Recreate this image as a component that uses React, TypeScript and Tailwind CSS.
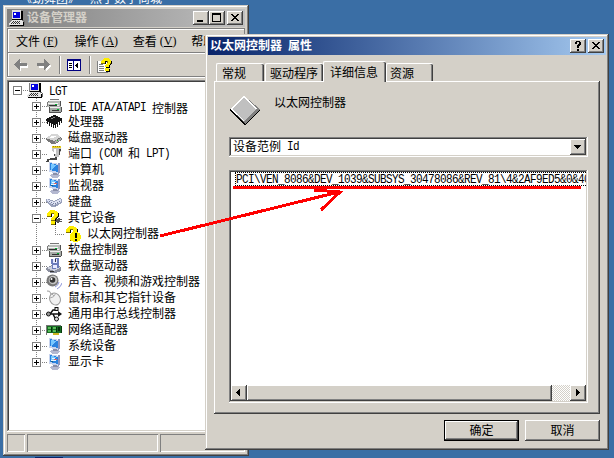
import React from 'react';

const WINDOW = 'bg-[#d4d0c8] shadow-[inset_-1px_-1px_#404040,inset_1px_1px_#d4d0c8,inset_-2px_-2px_#808080,inset_2px_2px_#ffffff]';
const RAISED = 'bg-[#d4d0c8] shadow-[inset_-1px_-1px_#404040,inset_1px_1px_#ffffff,inset_-2px_-2px_#808080]';
const SUNKEN = 'shadow-[inset_-1px_-1px_#ffffff,inset_1px_1px_#808080,inset_-2px_-2px_#d4d0c8,inset_2px_2px_#404040]';

// Chinese runs are 12px wide per character, latin runs 6px
const Text: React.FC<{ children: string }> = ({ children }) => (
    <span className="inline-flex items-center whitespace-pre">
        {(children.match(/[\x00-\x7f]+|[^\x00-\x7f]+/g) || []).map((run, i) =>
            run.charCodeAt(0) < 128 ? (
                <span key={i} className="inline-block translate-y-[0.5px] scale-y-[1.15] font-['Liberation_Mono',monospace] text-[11px] leading-[13px] tracking-[-0.6px]">{run}</span>
            ) : (
                <span key={i} className="font-['Noto_Sans_CJK_SC',sans-serif] text-[12px] leading-[14px]">{run}</span>
            )
        )}
    </span>
);

const Svg: React.FC<{ children: React.ReactNode; className?: string; size?: number }> = ({ children, className = '', size = 16 }) => (
    <svg width={size} height={size} viewBox={`0 0 ${size} ${size}`} className={`shrink-0 ${className}`} shapeRendering="crispEdges">
        {children}
    </svg>
);

const ComputerIcon = () => (
    <Svg>
        <path d="M3 0h9v10H2V1h1z" fill="#e0e0e0" />
        <path d="M2 1h1v9H2z" fill="#808080" />
        <path d="M12 1h2v9h-2zM3 9h10v1H3z" fill="#000" />
        <path d="M4 2h7v6H4z" fill="#0000e0" />
        <path d="M5 3h2v2H5z" fill="#fff" />
        <path d="M3 10h10l2 3v2H0v-2z" fill="#e4e4e4" />
        <path d="M1 15h14v1H1zM14 12h1v3h-1z" fill="#000" />
        <path d="M4 11h1v1H4zM6 11h1v1H6zM8 11h1v1H8zM10 11h1v1h-1zM3 12h1v1H3zM5 12h1v1H5zM7 12h1v1H7zM9 12h1v1H9zM2 13h1v1H2zM4 13h1v1H4zM6 13h1v1H6zM8 13h1v1H8zM10 13h1v1h-1z" fill="#303030" />
        <path d="M13 10h2v1h-2zM15 11h1v4h-1z" fill="#707070" />
    </Svg>
);

const ControllerIcon = () => (
    <Svg>
        <path d="M4 2h9l2 2v5H1V5z" fill="#b8bcb8" />
        <path d="M4 2h9l1 1H3zM1 5h11v1H1z" fill="#f4f4f4" />
        <path d="M4 1h9v1H4zM2 3h1v1H2zM1 4h1v4H1z" fill="#777" />
        <path d="M4 8h9l2 2v5H4z" fill="#a8aca8" />
        <path d="M5 7h8v1H5zM3 9h11v1H3z" fill="#eee" />
        <path d="M14 3h1v5h-1zM15 9h1v5h-1zM3 14h12v1H3zM3 9h1v5H3z" fill="#505050" />
        <path d="M6 12h7v1H6zM3 7h8v1H3z" fill="#333" />
        <path d="M9 6h2v1H9zM11 11h2v1h-2z" fill="#00b030" />
    </Svg>
);

const ChipIcon = () => (
    <Svg>
        <path d="M1 7h1v3H1zM3 8h1v4H3zM5 9h1v4H5zM7 10h1v4H7zM9 10h1v4H9zM11 8h1v5h-1zM13 7h1v4h-1zM15 6h1v3h-1z" fill="#111" />
        <path d="M7 1h3v1h2v1h2v1h2v2h-1v1h-1v1h-2v1h-1v1h-1v1H8v-1H6V9H4V8H2V7H0V5h1V4h2V3h2V2h2z" fill="#151515" />
        <path d="M7 3h2v1H7zM5 4h2v1H5z" fill="#888" />
    </Svg>
);

const DiskIcon = () => (
    <Svg>
        <path d="M0 8l6-4h5l5 4v2l-7 4H6L0 10z" fill="#777" />
        <path d="M0 8l6-4h5l4 3-7 4z" fill="#d5d5d5" />
        <path d="M5 6h5v1H5zM4 7h4v1H4z" fill="#fff" />
        <path d="M9 11l6-3v2l-6 3z" fill="#aaa" />
        <path d="M11 10h1v1h-1z" fill="#2b2" />
    </Svg>
);

const PortIcon = () => (
    <Svg>
        <path d="M6 0h9v2H6z" fill="#e8d020" />
        <path d="M7 0h1v1H7zM9 0h1v1H9zM11 0h1v1h-1zM13 0h1v1h-1z" fill="#a08800" />
        <path d="M6 2h9v3l-2 3v3H9V8L6 5z" fill="#c4c4c4" />
        <path d="M13 3h2v2h-1v4h-1zM8 7h1v3H8z" fill="#444" />
        <path d="M8 3h2v5H8z" fill="#fff" />
        <path d="M10 11v2H5L2 14v2H0" fill="none" stroke="#444" strokeWidth="1.5" />
    </Svg>
);

const MonitorIcon: React.FC<{ alt?: boolean }> = ({ alt }) => (
    <Svg>
        <path d="M4 13l6-3 4 3-3 3H6z" fill="#b4b8d0" />
        <path d="M7 11h5v2H7z" fill="#8a8ea8" />
        <path d="M3 0l10 2v10l-10-2z" fill="#c8d4ee" />
        <path d="M4 1l8 2v7l-8-2z" fill="#2b82df" />
        <path d="M5 2l5 1-4 5H5z" fill="#79c8ff" />
        <path d="M12 1h2v10l-2 1z" fill="#8c96c0" />
        {alt && (
            <g>
                <path d="M6 4h3v1H6zM5 6h5v1H5z" fill="#eaf6ff" />
                <path d="M8 5h3v1H8z" fill="#d66" />
                <path d="M5 7h2v1H5z" fill="#17608b" />
            </g>
        )}
    </Svg>
);

const KeyboardIcon = () => (
    <Svg>
        <path d="M0 5h3l5 2 6-3 2 2v3l-7 4H6L0 8z" fill="#9aa2bc" />
        <path d="M1 5l7 3 6-3 1 1v2l-7 3-6-3z" fill="#dce1f2" />
        <path d="M3 7h1v1H3zM5 8h1v1H5zM7 9h1v1H7zM9 9h1v1H9zM11 8h1v1h-1zM13 7h1v1h-1zM9 11h1v1H9zM6 10h1v1H6z" fill="#7680a0" />
    </Svg>
);

const QUESTION = 'M4 0h5v1h2v1h1v4h-1v1h-1v1H9v2H5V8h1V7h1V6h1V3H5v3H1V3h1V2h1V1h1zM5 11h4v3H5z';

const QuestionMark: React.FC<{ transform?: string }> = ({ transform }) => (
    <g transform={transform}>
        <path d={QUESTION} fill="#000" transform="translate(1 1)" />
        <path d={QUESTION} fill="#807000" transform="translate(-0.500 0.500)" />
        <path d={QUESTION} fill="#ffee00" />
    </g>
);

const QuestionIcon: React.FC<{ warn?: boolean }> = ({ warn }) => (
    <Svg>
        {!warn && <path d="M9 9h3V8h2v1h2v1h-2v1h2v1h-3v1h-2v-1H9z" fill="#555" />}
        <QuestionMark />
        {warn && (
            <g>
                <path d="M8 6h5v1h2v2h1v4h-1v2h-2v1H8v-1H6v-2H5V9h1V7h2z" fill="#fff000" />
                <path d="M10 7h2v5h-2zM10 13h2v2h-2z" fill="#000" />
            </g>
        )}
    </Svg>
);

const FloppyIcon = () => (
    <Svg>
        <path d="M0 10l6-3h7l2 3v3l-6 2H5l-5-3z" fill="#8c90a0" />
        <path d="M1 10l5-2h7l1 2-6 3z" fill="#ccd0dd" />
        <path d="M5 1l8-1v10l-7 1z" fill="#6c7cba" />
        <path d="M7 1h4v4H7zM7 7h4v3H7z" fill="#e8eaff" />
        <path d="M9 1h1v3H9z" fill="#334" />
        <path d="M4 13h4v1H4z" fill="#333" />
    </Svg>
);

const SpeakerIcon = () => (
    <svg width="16" height="16" viewBox="0 0 16 16" className="shrink-0">
        <circle cx="6.5" cy="6.5" r="6" fill="#777" />
        <circle cx="7" cy="6" r="4.3" fill="#c4c4c4" />
        <circle cx="6.5" cy="6" r="2.8" fill="#333" />
        <circle cx="5.5" cy="5" r="1" fill="#fff" />
        <path d="M9 13q3-1 4-5M11 15q4-2 5-6" fill="none" stroke="#8c94d8" />
    </svg>
);

const MouseIcon = () => (
    <svg width="16" height="16" viewBox="0 0 16 16" className="shrink-0">
        <path d="M1 1q3-1 4 3" fill="none" stroke="#999" />
        <ellipse cx="9" cy="9" rx="5.2" ry="6.2" transform="rotate(-28 9 9)" fill="#f1f1f1" stroke="#9a9a9a" />
        <path d="M4 8q4 0 6-5M6 4l2 2" fill="none" stroke="#aaa" />
    </svg>
);

const UsbIcon = () => (
    <svg width="16" height="16" viewBox="0 0 16 16" className="shrink-0">
        <path d="M2 8h12M4 8l3-4h3M7 8l2 4h2" fill="none" stroke="#111" strokeWidth="1.5" />
        <path d="M12 5l4 3-4 3z" fill="#111" />
        <circle cx="2.5" cy="8" r="2" fill="#999" stroke="#111" />
        <rect x="9" y="1.5" width="3" height="3" fill="#ddd" stroke="#111" />
        <circle cx="10.5" cy="13" r="2" fill="#ddd" stroke="#111" />
    </svg>
);

const NetworkIcon = () => (
    <Svg>
        <path d="M0 3h15v8H0z" fill="#176b23" />
        <path d="M0 3h1v10H0zM1 3h14v1H1z" fill="#777" />
        <path d="M2 5h3v2H2zM7 5h3v2H7zM2 8h3v2H2zM7 8h3v2H7z" fill="#58bd58" />
        <path d="M5 5h1v5H5zM10 5h1v5h-1zM12 5h2v4h-2z" fill="#052f0a" />
        <path d="M7 11h6v2H7z" fill="#cfb420" />
        <path d="M15 4h1v7h-1z" fill="#063c0c" />
    </Svg>
);

interface Device {
    name: string;
    icon: React.ReactNode;
    child?: { name: string; icon: React.ReactNode };
}

const devices: Device[] = [
    { name: 'IDE ATA/ATAPI 控制器', icon: <ControllerIcon /> },
    { name: '处理器', icon: <ChipIcon /> },
    { name: '磁盘驱动器', icon: <DiskIcon /> },
    { name: '端口 (COM 和 LPT)', icon: <PortIcon /> },
    { name: '计算机', icon: <MonitorIcon /> },
    { name: '监视器', icon: <MonitorIcon alt /> },
    { name: '键盘', icon: <KeyboardIcon /> },
    { name: '其它设备', icon: <QuestionIcon />, child: { name: '以太网控制器', icon: <QuestionIcon warn /> } },
    { name: '软盘控制器', icon: <ControllerIcon /> },
    { name: '软盘驱动器', icon: <FloppyIcon /> },
    { name: '声音、视频和游戏控制器', icon: <SpeakerIcon /> },
    { name: '鼠标和其它指针设备', icon: <MouseIcon /> },
    { name: '通用串行总线控制器', icon: <UsbIcon /> },
    { name: '网络适配器', icon: <NetworkIcon /> },
    { name: '系统设备', icon: <MonitorIcon /> },
    { name: '显示卡', icon: <MonitorIcon alt /> },
];

// expander box, with the dotted guide lines around it
const Toggle: React.FC<{ open?: boolean; up?: boolean; down?: boolean }> = ({ open, up = true, down = true }) => (
    <Svg className="mr-[-1px]">
        {up && <path d="M5.5 0v4" stroke="#808080" strokeDasharray="1 1" />}
        {down && <path d="M5.5 14v2" stroke="#808080" strokeDasharray="1 1" />}
        <path d="M11 8.5h5" stroke="#808080" strokeDasharray="1 1" />
        <rect x="1.5" y="4.5" width="8" height="8" fill="#fff" stroke="#808080" />
        <path d="M3 8h5v1H3z" fill="#000" />
        {!open && <path d="M5 6h1v5H5z" fill="#000" />}
    </Svg>
);

const DeviceTree = () => (
    <div className="pl-[3px]">
        <div className="flex h-4 items-center">
            <Toggle open up={false} down={false} />
            <ComputerIcon />
            <span className="ml-[6px]"><Text>LGT</Text></span>
        </div>
        {devices.map((device, i) => (
            <React.Fragment key={device.name}>
                <div className="flex h-4 items-center pl-[19px]">
                    <Toggle open={!!device.child} down={i < devices.length - 1} />
                    {device.icon}
                    <span className="ml-[6px]"><Text>{device.name}</Text></span>
                </div>
                {device.child && (
                    <div className="flex h-4 items-center pl-[19px]">
                        <svg width="34" height="16" className="shrink-0" shapeRendering="crispEdges">
                            <path d="M5.5 0v16M24.5 0v8M24 8.5h10" fill="none" stroke="#808080" strokeDasharray="1 1" />
                        </svg>
                        {device.child.icon}
                        <span className="ml-[6px]"><Text>{device.child.name}</Text></span>
                    </div>
                )}
            </React.Fragment>
        ))}
    </div>
);

const CaptionButton: React.FC<{ path: string }> = ({ path }) => (
    <button className={`h-[14px] w-4 ${RAISED}`}>
        <svg width="16" height="14" shapeRendering="crispEdges"><path d={path} fillRule="evenodd" /></svg>
    </button>
);

const CLOSE = 'M4 3h2v1h1v1h2V4h1V3h2v1h-1v1h-1v1H9v1h1v1h1v1h1v1h-2V9H9V8H7v1H6v1H4V9h1V8h1V7h1V6H6V5H5V4H4z';
const MENUS = [['文件', 'F'], ['操作', 'A'], ['查看', 'V'], ['帮助', 'H']];

const ToolSeparator = ({ className = '' }) => <div className={`h-[18px] w-[2px] border-l border-[#808080] bg-white ${className}`} />;

const DeviceManager = () => (
    <div className={`absolute left-[3px] top-[5px] flex h-[451px] w-[246px] flex-col p-1 ${WINDOW}`}>
        <div className="flex h-[18px] shrink-0 items-center bg-gradient-to-r from-[#808080] to-[#c0c0c0] pl-[2px] pr-[2px] text-[#d4d0c8]">
            <ComputerIcon />
            <b className="ml-[2px] grow text-[12px]"><Text>设备管理器</Text></b>
            <CaptionButton path="M4 9h6v2H4z" />
            <CaptionButton path="M3 2h9v9H3zM4 4v6h7V4z" />
            <div className="w-[2px]" />
            <CaptionButton path={CLOSE} />
        </div>
        <div className="mt-[1px] h-[49px] shrink-0 border border-b-0 border-[#808080] shadow-[inset_1px_1px_#ffffff]">
            <div className="flex h-[24px] items-center gap-[16.4px] overflow-hidden border-b border-[#808080] pl-[8px]">
                {MENUS.map(([label, key]) => (
                    <span key={key} className="flex w-[42px] shrink-0 items-center gap-[3px]">
                        <Text>{label}</Text>
                        <span className="font-['Liberation_Serif',serif] text-[12px] leading-[14px]">(<u>{key}</u>)</span>
                    </span>
                ))}
            </div>
            <div className="flex h-[24px] items-center border-b border-[#808080] pl-[6px] shadow-[inset_0_1px_#ffffff]">
                <svg width="38" height="13" shapeRendering="crispEdges">
                    <path d="M7 3v3h7v3H7v3L1 7z" fill="#fff" transform="translate(0 1)" />
                    <path d="M6 1v4h7v3H6v4L0 6.500z" fill="#808080" />
                    <path d="M31 3v3h-7v3h7v3l6-5z" fill="#fff" transform="translate(1 1)" />
                    <path d="M30 1v4h-7v3h7v4l6-5.500z" fill="#808080" />
                </svg>
                <ToolSeparator className="ml-[7px]" />
                <svg width="14" height="12" className="ml-[6px]" shapeRendering="crispEdges">
                    <path d="M0 0h14v12H0z" fill="#000080" />
                    <path d="M1 2h5v9H1zM7 2h6v9H7z" fill="#fff" />
                    <path d="M2 4h3v1H2zM2 6h3v1H2zM2 8h3v1H2zM10 4h1v5h-1v-1H9V7H8V6h1V5h1z" fill="#000" />
                </svg>
                <ToolSeparator className="ml-[8px]" />
                <Svg className="ml-[6px]">
                    <path d="M1 4h8l2 2v9H1z" fill="#fff" />
                    <path d="M0 4h1v12H0zM1 15h10v1H1zM10 8h1v7h-1z" fill="#808080" />
                    <path d="M2 7h4v1H2zM2 9h5v1H2zM2 11h5v1H2zM2 13h5v1H2z" fill="#808080" />
                    <QuestionMark transform="translate(3.500 1) scale(0.9)" />
                </Svg>
            </div>
        </div>
        <div className="h-[3px] shrink-0 border-t border-white" />
        <div className={`grow bg-white p-[2px] ${SUNKEN}`}>
            <DeviceTree />
        </div>
        <div className="mt-[2px] flex h-[18px] shrink-0 gap-[2px]">
            <div className="w-[18px] shadow-[inset_1px_1px_#808080,inset_-1px_-1px_#ffffff]" />
            <div className="w-[131px] shadow-[inset_1px_1px_#808080,inset_-1px_-1px_#ffffff]" />
            <div className="grow shadow-[inset_1px_1px_#808080,inset_-1px_-1px_#ffffff]" />
        </div>
    </div>
);

const TAB = 'flex items-center rounded-t-[2px] border-l border-t border-white bg-[#d4d0c8] shadow-[inset_-1px_0_#404040,inset_-2px_0_#808080]';

const PropertiesDialog = () => (
    <div className={`absolute left-[205px] top-[34px] flex h-[416px] w-[404px] flex-col p-[3px] ${WINDOW}`}>
        <div className="flex h-[18px] shrink-0 items-center bg-gradient-to-r from-[#0a246a] to-[#a6caf0] pl-[2px] pr-[2px] text-white">
            <b className="grow"><Text>以太网控制器 属性</Text></b>
            <CaptionButton path="M5 3h1V2h4v1h1v3h-1v1H9v2H7V6h1V5h1V3H7v2H5zM7 10h2v2H7z" />
            <div className="w-[2px]" />
            <CaptionButton path={CLOSE} />
        </div>
        <div className="mt-[6px] flex h-[20px] shrink-0 items-end pl-[8px]">
            <div className={`h-[18px] w-[48px] pl-[5px] ${TAB}`}><Text>常规</Text></div>
            <div className={`ml-[1px] h-[18px] w-[58px] pl-[4px] ${TAB}`}><Text>驱动程序</Text></div>
            <div className={`z-10 mb-[-1px] h-[21px] w-[63px] pb-[1px] pl-[6px] ${TAB}`}><Text>详细信息</Text></div>
            <div className={`h-[18px] w-[47px] pl-[3px] ${TAB}`}><Text>资源</Text></div>
        </div>
        <div className="ml-[6px] h-[333px] w-[386px] shrink-0 px-[15px] pt-[12px] shadow-[inset_-1px_-1px_#404040,inset_1px_1px_#ffffff,inset_-2px_-2px_#808080]">
            <div className="flex h-[44px]">
                <svg width="32" height="32" className="mt-[2px]" shapeRendering="crispEdges">
                    <path d="M1 16L16 30L31 15L30 13L15 27L1 14z" fill="#000" />
                    <path d="M15 1L31 14L16 29L1 14z" fill="#808080" />
                    <path d="M15 1L28 13L15 26L1 14z" fill="#fff" />
                    <path d="M15 3L27 14L15 26L3 14z" fill="#c0c0c0" />
                </svg>
                <div className="ml-[13px] mt-[1px]"><Text>以太网控制器</Text></div>
            </div>
            <div className={`flex h-[20px] w-[359px] items-center bg-white p-[2px] pl-[4px] ${SUNKEN}`}>
                <span className="grow"><Text>设备范例 Id</Text></span>
                <button className={`h-4 w-4 ${RAISED}`}>
                    <svg width="16" height="16" shapeRendering="crispEdges"><path d="M4 6h7v1h-1v1H9v1H8v1H7V9H6V8H5V7H4z" /></svg>
                </button>
            </div>
            <div className={`mt-[13px] flex h-[233px] w-[359px] flex-col overflow-hidden bg-white p-[2px] ${SUNKEN}`}>
                <div className="ml-[4px] flex h-[14px] shrink-0 items-center overflow-hidden border border-r-0 border-dotted border-black pt-[1px]">
                    <Text>{'PCI\\VEN_8086&DEV_1039&SUBSYS_30478086&REV_81\\4&2AF9ED5&0&40F0'}</Text>
                </div>
                <div className="grow" />
                <div className="flex h-4 shrink-0 bg-[repeating-conic-gradient(#ffffff_0_25%,#d4d0c8_0_50%)] bg-[length:2px_2px]">
                    <button className={`h-4 w-4 ${RAISED}`}>
                        <svg width="16" height="16" shapeRendering="crispEdges"><path d="M9 4v7H8v-1H7V9H6V8H5V7h1V6h1V5h1V4z" /></svg>
                    </button>
                    <div className={`w-[305px] ${RAISED}`} />
                    <div className="grow" />
                    <button className={`h-4 w-4 ${RAISED}`}>
                        <svg width="16" height="16" shapeRendering="crispEdges"><path d="M6 4v7h1v-1h1V9h1V8h1V7H9V6H8V5H7V4z" /></svg>
                    </button>
                </div>
            </div>
        </div>
        <div className="mt-[6px] flex justify-end gap-[6px] pr-[6px]">
            <button className={`h-[21px] w-[75px] border border-black leading-[14px] ${RAISED}`}><Text>确定</Text></button>
            <button className={`h-[21px] w-[75px] leading-[14px] ${RAISED}`}><Text>取消</Text></button>
        </div>
    </div>
);

export default function App() {
    return (
        <div className="relative h-[458px] w-[614px] overflow-hidden bg-[#3a6ea5] text-[12px] text-black">
            <div className="absolute left-[20px] top-[-9px] flex gap-[10px] text-white">
                <Text>《劲舞团》</Text>
                <Text>燕子数字商城</Text>
            </div>
            <div className="absolute left-[35px] top-[457px] h-[1px] w-[28px] bg-[#0a246a]" />
            <DeviceManager />
            <PropertiesDialog />
            <svg width="614" height="458" className="pointer-events-none absolute left-0 top-0" shapeRendering="crispEdges" fill="none" stroke="#ff0000">
                <path d="M233 187.500H581" strokeWidth="3" />
                <path d="M160 236L339 192M314 190L340 192L321 210" strokeWidth="3" />
            </svg>
        </div>
    );
}
